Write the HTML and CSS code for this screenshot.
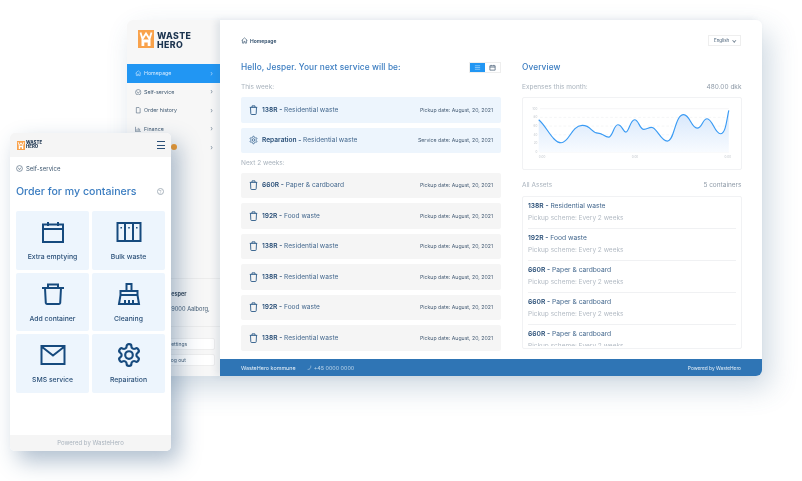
FILE: index.html
```html
<!DOCTYPE html>
<html lang="en">
<head>
    <meta charset="UTF-8">
    <meta name="viewport" content="width=device-width, initial-scale=1.0">
    <title>WasteHero</title>
    <link rel="stylesheet" href="styles.css">
</head>
<body>
    <svg class="defs" aria-hidden="true">
        <symbol id="bin" viewBox="0 0 12 13">
            <path d="M1 3h10M4 3V1h4v2M2 3l.4 8.500a1 1 0 0 0 1 1h5.200a1 1 0 0 0 1-1L10 3" fill="none" stroke="currentColor" stroke-width="1.200"/>
        </symbol>
        <symbol id="gear" viewBox="0 0 24 24">
            <g fill="none" stroke="currentColor" stroke-width="2">
                <path d="M12.220 2h-.44a2 2 0 0 0-2 2v.18a2 2 0 0 1-1 1.730l-.43.25a2 2 0 0 1-2 0l-.15-.08a2 2 0 0 0-2.730.73l-.22.38a2 2 0 0 0 .73 2.730l.15.1a2 2 0 0 1 1 1.720v.51a2 2 0 0 1-1 1.740l-.15.09a2 2 0 0 0-.73 2.730l.22.38a2 2 0 0 0 2.730.73l.15-.08a2 2 0 0 1 2 0l.43.25a2 2 0 0 1 1 1.730V20a2 2 0 0 0 2 2h.44a2 2 0 0 0 2-2v-.18a2 2 0 0 1 1-1.730l.43-.25a2 2 0 0 1 2 0l.15.08a2 2 0 0 0 2.730-.73l.22-.39a2 2 0 0 0-.73-2.730l-.15-.08a2 2 0 0 1-1-1.740v-.5a2 2 0 0 1 1-1.740l.15-.09a2 2 0 0 0 .73-2.730l-.22-.38a2 2 0 0 0-2.730-.73l-.15.08a2 2 0 0 1-2 0l-.43-.25a2 2 0 0 1-1-1.730V4a2 2 0 0 0-2-2z"/>
                <circle cx="12" cy="12" r="3.500"/>
            </g>
        </symbol>
        <symbol id="house" viewBox="0 0 12 12">
            <path d="M1 6l5-4.500L11 6M2.500 5v5.500h2.500V7.500h2v3h2.500V5" fill="none" stroke="currentColor"/>
        </symbol>
        <symbol id="circlecheck" viewBox="0 0 12 12">
            <circle cx="6" cy="6" r="5" fill="none" stroke="currentColor"/>
            <path d="M3.500 4.500L6 8l2.500-3.500" fill="none" stroke="currentColor"/>
        </symbol>
        <symbol id="logo" viewBox="0 0 16 18">
            <rect width="16" height="18" fill="#f9a24b"/>
            <path d="M2.500 2.500L4.500 9 8 3.500 11.500 9l2-6.500" fill="none" stroke="#fff" stroke-width="1.800"/>
            <path d="M3.500 9.500h9V16h-2.800v-3.500H6.300V16H3.500z" fill="#fff"/>
        </symbol>
    </svg>

    <div class="window desktop">
        <div class="sidebar">
            <div class="brand">
                <svg class="brand-mark"><use href="#logo"/></svg>
                <div class="brand-name">WASTE<br>HERO</div>
            </div>
            <div class="nav">
                <a class="nav-item active"><svg class="nav-icon"><use href="#house"/></svg>Homepage<span class="chev">&#8250;</span></a>
                <a class="nav-item"><svg class="nav-icon"><use href="#circlecheck"/></svg>Self-service<span class="chev">&#8250;</span></a>
                <a class="nav-item">
                    <svg class="nav-icon" viewBox="0 0 12 12"><path d="M2.500 1h5l2 2v8h-7z" fill="none" stroke="currentColor"/></svg>Order history<span class="chev">&#8250;</span>
                </a>
                <a class="nav-item">
                    <svg class="nav-icon" viewBox="0 0 12 12"><path d="M1 1.500V10.500h10M3.500 9V6M6 9V3.500M8.500 9V5" fill="none" stroke="currentColor"/></svg>Finance<span class="chev">&#8250;</span>
                </a>
                <a class="nav-item">Support<span class="badge"></span><span class="chev">&#8250;</span></a>
            </div>
            <div class="account">
                <div class="account-name">Jesper</div>
                <div class="account-address">, 9000 Aalborg,</div>
            </div>
            <div class="account-actions">
                <a class="side-btn">Settings</a>
                <a class="side-btn">Log out</a>
            </div>
        </div>

        <div class="main">
            <div class="topbar">
                <div class="crumb"><svg class="crumb-icon"><use href="#house"/></svg>Homepage</div>
                <div class="lang">English <span class="lang-arrow"></span></div>
            </div>

            <div class="columns">
                <div>
                    <div class="col-head">
                        <h2>Hello, Jesper. Your next service will be:</h2>
                        <div class="toggle">
                            <span class="toggle-btn on">
                                <svg viewBox="0 0 8 8"><path d="M1 2h6M1 4h6M1 6h6" stroke="currentColor" stroke-width=".7"/></svg>
                            </span>
                            <span class="toggle-btn">
                                <svg viewBox="0 0 8 8"><path d="M1 2h6v5H1zM1 3.500h6M2.500 1v1M5.500 1v1" fill="none" stroke="currentColor" stroke-width=".8"/></svg>
                            </span>
                        </div>
                    </div>

                    <div class="label first">This week:</div>
                    <div class="rows">
                        <div class="row blue"><svg class="row-icon"><use href="#bin"/></svg><span class="row-name"><b>138R -</b> Residential waste</span><span class="row-date">Pickup date: August, 20, 2021</span></div>
                        <div class="row blue"><svg class="row-icon"><use href="#gear"/></svg><span class="row-name"><b>Reparation -</b> Residential waste</span><span class="row-date">Service date: August, 20, 2021</span></div>
                    </div>

                    <div class="label">Next 2 weeks:</div>
                    <div class="rows">
                        <div class="row"><svg class="row-icon"><use href="#bin"/></svg><span class="row-name"><b>660R -</b> Paper &amp; cardboard</span><span class="row-date">Pickup date: August, 20, 2021</span></div>
                        <div class="row"><svg class="row-icon"><use href="#bin"/></svg><span class="row-name"><b>192R -</b> Food waste</span><span class="row-date">Pickup date: August, 20, 2021</span></div>
                        <div class="row"><svg class="row-icon"><use href="#bin"/></svg><span class="row-name"><b>138R -</b> Residential waste</span><span class="row-date">Pickup date: August, 20, 2021</span></div>
                        <div class="row"><svg class="row-icon"><use href="#bin"/></svg><span class="row-name"><b>138R -</b> Residential waste</span><span class="row-date">Pickup date: August, 20, 2021</span></div>
                        <div class="row"><svg class="row-icon"><use href="#bin"/></svg><span class="row-name"><b>192R -</b> Food waste</span><span class="row-date">Pickup date: August, 20, 2021</span></div>
                        <div class="row"><svg class="row-icon"><use href="#bin"/></svg><span class="row-name"><b>138R -</b> Residential waste</span><span class="row-date">Pickup date: August, 20, 2021</span></div>
                    </div>
                </div>

                <div>
                    <div class="col-head">
                        <h2>Overview</h2>
                    </div>
                    <div class="label split first"><span>Expenses this month:</span><span class="strong">480.00 dkk</span></div>
                    <div class="chart-card">
                        <svg class="chart" viewBox="41 233 651 211" preserveAspectRatio="none">
                            <defs>
                                <linearGradient id="fade" x1="0" y1="0" x2="0" y2="1">
                                    <stop offset="0" stop-color="#d5e6fb"/>
                                    <stop offset="1" stop-color="#f8fbff"/>
                                </linearGradient>
                            </defs>
                            <path class="grid" d="M92 265H657"/>
                            <path class="grid dash" d="M92 291H657M92 317H657M92 343H657M92 369H657"/>
                            <path class="grid" d="M92 395H657"/>
                            <path d="M88 298C110 315 130 367 155 367C180 367 185 316 218 315C245 314 245 338 265 338C280 338 285 350 297 350C310 350 312 313 325 313C338 313 340 335 349 335C358 335 362 298 375 298C388 298 390 328 403 327C415 326 420 318 430 322C445 330 455 362 473 362C495 362 495 283 522 283C540 283 545 323 562 323C578 323 578 295 592 295C608 295 615 340 632 340C648 340 650 300 657 270V395H88Z" fill="url(#fade)"/>
                            <path class="line" d="M88 298C110 315 130 367 155 367C180 367 185 316 218 315C245 314 245 338 265 338C280 338 285 350 297 350C310 350 312 313 325 313C338 313 340 335 349 335C358 335 362 298 375 298C388 298 390 328 403 327C415 326 420 318 430 322C445 330 455 362 473 362C495 362 495 283 522 283C540 283 545 323 562 323C578 323 578 295 592 295C608 295 615 340 632 340C648 340 650 300 657 270"/>
                            <g class="ticks" text-anchor="end">
                                <text x="84" y="268">100</text>
                                <text x="84" y="294">80</text>
                                <text x="84" y="320">60</text>
                                <text x="84" y="346">40</text>
                                <text x="84" y="372">20</text>
                                <text x="84" y="398">0</text>
                            </g>
                            <g class="ticks" text-anchor="middle">
                                <text x="98" y="413">0:00</text>
                                <text x="376" y="413">0:00</text>
                                <text x="654" y="413">0:00</text>
                            </g>
                        </svg>
                    </div>
                    <div class="label split assets-label"><span>All Assets</span><span class="strong">5 containers</span></div>
                    <div class="assets">
                        <div class="assets-scroll">
                            <div class="asset"><div class="asset-name"><b>138R -</b> Residential waste</div><div class="asset-sub">Pickup scheme: Every 2 weeks</div></div>
                            <div class="asset"><div class="asset-name"><b>192R -</b> Food waste</div><div class="asset-sub">Pickup scheme: Every 2 weeks</div></div>
                            <div class="asset"><div class="asset-name"><b>660R -</b> Paper &amp; cardboard</div><div class="asset-sub">Pickup scheme: Every 2 weeks</div></div>
                            <div class="asset"><div class="asset-name"><b>660R -</b> Paper &amp; cardboard</div><div class="asset-sub">Pickup scheme: Every 2 weeks</div></div>
                            <div class="asset"><div class="asset-name"><b>660R -</b> Paper &amp; cardboard</div><div class="asset-sub">Pickup scheme: Every 2 weeks</div></div>
                        </div>
                    </div>
                </div>
            </div>

            <div class="footer">
                <span>WasteHero kommune</span>
                <span class="phone-no">
                    <svg viewBox="0 0 8 8"><path d="M6 1v1.500C6 5 4.500 7 2 7H1" fill="none" stroke="currentColor"/></svg>+45 0000 0000
                </span>
                <span class="powered">Powered by WasteHero</span>
            </div>
        </div>
    </div>

    <div class="window mobile">
        <div class="m-header">
            <svg class="m-logo"><use href="#logo"/></svg>
            <div class="m-brand">WASTE<br>HERO</div>
            <div class="burger"><span></span><span></span><span></span></div>
        </div>
        <div class="m-body">
            <div class="m-crumb"><svg class="m-crumb-icon"><use href="#circlecheck"/></svg>Self-service</div>
            <div class="m-title">
                <h1>Order for my containers</h1>
                <span class="help">?</span>
            </div>
            <div class="tiles">
                <div class="tile">
                    <svg viewBox="0 0 22 22"><path d="M1 3.500h20v17.500H1zM1 8h20M6 1v4M16 1v4" fill="none" stroke="currentColor" stroke-width="2"/></svg>
                    Extra emptying
                </div>
                <div class="tile">
                    <svg viewBox="0 0 25 22"><path d="M1 2h23v18H1zM8.500 2v18M16.500 2v18" fill="none" stroke="currentColor" stroke-width="2"/><path d="M4.700 6v1.500M12.500 6v1.500M20.300 6v1.500" stroke="currentColor" stroke-width="1.500"/></svg>
                    Bulk waste
                </div>
                <div class="tile">
                    <svg viewBox="0 0 22 22"><path d="M0 5h22M6 5V1.500h10V5M3 5l.8 15a1.500 1.500 0 0 0 1.500 1h11.400a1.500 1.500 0 0 0 1.500-1L19 5" fill="none" stroke="currentColor" stroke-width="2"/></svg>
                    Add container
                </div>
                <div class="tile">
                    <svg viewBox="0 0 22 22"><path d="M8.500 8V1h5v7M2.500 8h17v4h-17zM1 21l1.500-9h17l1.500 9zM7 21v-4M11 21v-4M15 21v-4" fill="none" stroke="currentColor" stroke-width="2"/></svg>
                    Cleaning
                </div>
                <div class="tile">
                    <svg viewBox="0 0 25 22"><path d="M1 2h23v18H1zM1 2.500l11.500 9 11.500-9" fill="none" stroke="currentColor" stroke-width="2"/></svg>
                    SMS service
                </div>
                <div class="tile">
                    <svg class="tile-gear"><use href="#gear"/></svg>
                    Repairation
                </div>
            </div>
        </div>
        <div class="m-footer">Powered by WasteHero</div>
    </div>
</body>
</html>
```

FILE: styles.css
```css
* {
    box-sizing: border-box;
}
body {
    font-family: Inter, "Noto Sans", sans-serif;
    margin: 0;
    width: 802px;
    height: 481px;
    overflow: hidden;
    position: relative;
    background-color: #fff;
    color: #2b5078;
}
h1, h2 {
    margin: 0;
    font-weight: 500;
    color: #3a7cc0;
}
.defs {
    display: none;
}
.window {
    position: absolute;
    overflow: hidden;
    display: flex;
    background: #fff;
    will-change: transform; /* keeps the tiny text from colour fringing */
}

/* desktop window */
.desktop {
    left: 127px;
    top: 20px;
    width: 635px;
    height: 356px;
    border-radius: 6px;
    overflow: visible;
    box-shadow: 8px 12px 28px rgba(60, 100, 140, 0.24);
}
.sidebar {
    width: 93px;
    background-color: #f7f7f7;
    border-radius: 6px 0 0 6px;
    display: flex;
    flex-direction: column;
}
.brand {
    display: flex;
    align-items: flex-start;
    gap: 3px;
    padding: 10px 0 0 11px;
    height: 44px;
}
.brand-mark {
    width: 16px;
    height: 18px;
}
.brand-name {
    font-size: 8.800px;
    line-height: 9px;
    font-weight: 800;
    color: #1d3550;
    letter-spacing: 0.4px;
    margin-top: 1px;
}
.nav-item {
    display: flex;
    align-items: center;
    height: 18.500px;
    padding: 0 7px 0 8px;
    font-size: 5.300px;
    color: #3f5870;
}
.nav-item.active {
    background-color: #2196f3;
    color: #d8ecff;
}
.nav-icon {
    width: 6.500px;
    height: 6.500px;
    margin-right: 2.500px;
}
.chev {
    margin-left: auto;
    font-size: 7px;
    opacity: 0.7;
}
.badge {
    width: 6px;
    height: 6px;
    border-radius: 50%;
    background-color: #f39a2b;
    margin-left: 16px;
}
.account {
    margin-top: auto;
    height: 49px;
    padding: 12px 0 0 41px;
    border-top: 1px solid #ececec;
    border-bottom: 1px solid #ececec;
}
.account-name {
    font-size: 5.500px;
    font-weight: 700;
    color: #2c3e50;
    margin-bottom: 8px;
}
.account-address {
    font-size: 5.700px;
    color: #3f5870;
    white-space: nowrap;
}
.account-actions {
    display: flex;
    flex-direction: column;
    gap: 3.500px;
    padding: 11px 5px 10px 5px;
}
.side-btn {
    height: 12.500px;
    background-color: #fff;
    border: 1px solid #eee;
    border-radius: 2px;
    padding-left: 35px;
    font-size: 5px;
    line-height: 10.500px;
    color: #3f5870;
}
.main {
    position: relative;
    flex: 1;
    min-width: 0;
    display: flex;
    flex-direction: column;
    background-color: #fff;
    border-radius: 0 6px 6px 0;
    box-shadow: -4px 0 7px rgba(60, 90, 120, 0.12);
}
.topbar {
    display: flex;
    justify-content: space-between;
    align-items: center;
    padding: 15px 21px 0 21px;
}
.crumb {
    display: flex;
    align-items: center;
    font-size: 5px;
    font-weight: 600;
    color: #2c4a68;
}
.crumb-icon {
    width: 7px;
    height: 7px;
    margin-right: 2px;
}
.lang {
    width: 33px;
    height: 11px;
    border: 1px solid #eee;
    font-size: 4.500px;
    line-height: 9px;
    text-align: center;
    color: #3f5870;
}
.lang-arrow {
    display: inline-block;
    width: 2.500px;
    height: 2.500px;
    border-right: 0.500px solid #7d8c9b;
    border-bottom: 0.500px solid #7d8c9b;
    transform: rotate(45deg);
    margin: 0 0 1px 2px;
}
.columns {
    flex: 1;
    display: grid;
    grid-template-columns: 260px 219.500px;
    column-gap: 21px;
    padding: 15px 21px 0 21px;
}
.col-head {
    display: flex;
    justify-content: space-between;
    align-items: center;
    height: 12px;
}
.col-head h2 {
    font-size: 8.300px;
    letter-spacing: 0.1px;
}
.toggle {
    display: flex;
    width: 32px;
    height: 11px;
    border: 1px solid #eee;
}
.toggle-btn {
    flex: 1;
    display: flex;
    align-items: center;
    justify-content: center;
    color: #3f5870;
}
.toggle-btn.on {
    background-color: #2196f3;
    color: #bcdfff;
}
.toggle-btn svg {
    width: 7px;
    height: 7px;
}
.label {
    height: 10px;
    margin: 4.500px 0 5px 0;
    font-size: 6.500px;
    line-height: 10px;
    color: #a9b3bd;
}
.label.first {
    margin-top: 9px;
}
.label.split {
    display: flex;
    justify-content: space-between;
}
.label .strong {
    color: #8f9ba8;
}
.assets-label {
    margin: 10px 0 6px 0;
}
.rows {
    display: flex;
    flex-direction: column;
    gap: 5px;
}
.row {
    display: flex;
    align-items: center;
    height: 25.500px;
    padding: 0 8px;
    background-color: #f5f5f5;
    border-radius: 2px;
}
.row.blue {
    background-color: #edf5fd;
}
.row-icon {
    width: 9px;
    height: 10px;
    margin-right: 4px;
    color: #2b5a88;
}
.row-name {
    font-size: 6.600px;
    color: #44688e;
}
.row-name b, .asset-name b {
    font-weight: 600;
    color: #2b5078;
}
.row-date {
    margin-left: auto;
    font-size: 5.200px;
    color: #4a6078;
}
.chart-card {
    height: 72.500px;
    border: 1px solid #f1f2f4;
    border-radius: 2px;
}
.chart {
    display: block;
    width: 100%;
    height: 100%;
}
.grid {
    fill: none;
    stroke: #f0f1f3;
    stroke-width: 2;
}
.grid.dash {
    stroke-dasharray: 8 6;
}
.line {
    fill: none;
    stroke: #3a9bf4;
    stroke-width: 3.500;
}
.ticks {
    font-size: 9px;
    fill: #c4c9cf;
}
.assets {
    height: 153px;
    padding: 0 5px;
    border: 1px solid #f1f2f4;
    border-radius: 2px;
}
.assets-scroll {
    height: 149px;
    overflow: hidden;
}
.asset {
    height: 32px;
    padding-top: 5px;
    border-bottom: 1px solid #f0f1f3;
}
.asset-name {
    font-size: 6.700px;
    line-height: 8px;
    color: #44688e;
}
.asset-sub {
    margin-top: 4px;
    font-size: 6.500px;
    line-height: 8px;
    color: #b3bbc4;
}
.footer {
    display: flex;
    align-items: center;
    height: 17px;
    padding: 0 21px;
    background-color: #2f75b5;
    border-radius: 0 0 6px 0;
    color: #e6f0f8;
    font-size: 5.400px;
}
.phone-no {
    display: flex;
    align-items: center;
    gap: 2px;
    margin-left: 11px;
    color: #bcd5ea;
}
.phone-no svg {
    width: 5px;
    height: 5px;
}
.powered {
    margin-left: auto;
    font-size: 4.800px;
}

/* phone window */
.mobile {
    left: 10px;
    top: 133px;
    width: 161px;
    height: 318px;
    flex-direction: column;
    border-radius: 5px;
    box-shadow: 8px 10px 22px rgba(45, 85, 125, 0.38);
}
.m-header {
    display: flex;
    align-items: center;
    height: 24px;
    padding: 0 6px 0 7px;
    background-color: #f5f5f5;
}
.m-logo {
    width: 8px;
    height: 9px;
    margin-right: 1px;
}
.m-brand {
    font-size: 4.400px;
    line-height: 4.500px;
    font-weight: 800;
    color: #1d3550;
}
.burger {
    margin-left: auto;
    display: flex;
    flex-direction: column;
    gap: 2.500px;
}
.burger span {
    display: block;
    width: 8px;
    height: 1px;
    background-color: #2b5078;
}
.m-body {
    flex: 1;
    padding: 6px 6px 0 6px;
}
.m-crumb {
    display: flex;
    align-items: center;
    height: 10px;
    font-size: 6px;
    color: #3f5870;
}
.m-crumb-icon {
    width: 7px;
    height: 7px;
    margin-right: 3px;
}
.m-title {
    display: flex;
    justify-content: space-between;
    align-items: center;
    margin: 12px 1px 13px 0;
    height: 13px;
}
.m-title h1 {
    font-size: 10.600px;
}
.help {
    width: 7.500px;
    height: 7.500px;
    border: 0.700px solid #a9b3bd;
    border-radius: 50%;
    font-size: 5px;
    line-height: 6px;
    text-align: center;
    color: #a9b3bd;
}
.tiles {
    display: grid;
    grid-template-columns: 73px 73px;
    grid-auto-rows: 58.500px;
    gap: 3px;
}
.tile {
    display: flex;
    flex-direction: column;
    align-items: center;
    padding-top: 10px;
    background-color: #edf5fd;
    border-radius: 2px;
    font-size: 6.850px;
    font-weight: 500;
    color: #2b5078;
}
.tile svg {
    width: 26px;
    height: 22px;
    margin-bottom: 9px;
    color: #164a7e;
}
.tile .tile-gear {
    width: 26px;
    height: 26px;
    margin: -2px 0 7px 0;
}
.m-footer {
    height: 16px;
    background-color: #f5f5f5;
    font-size: 6px;
    line-height: 16px;
    text-align: center;
    color: #a9b3bd;
}
```
